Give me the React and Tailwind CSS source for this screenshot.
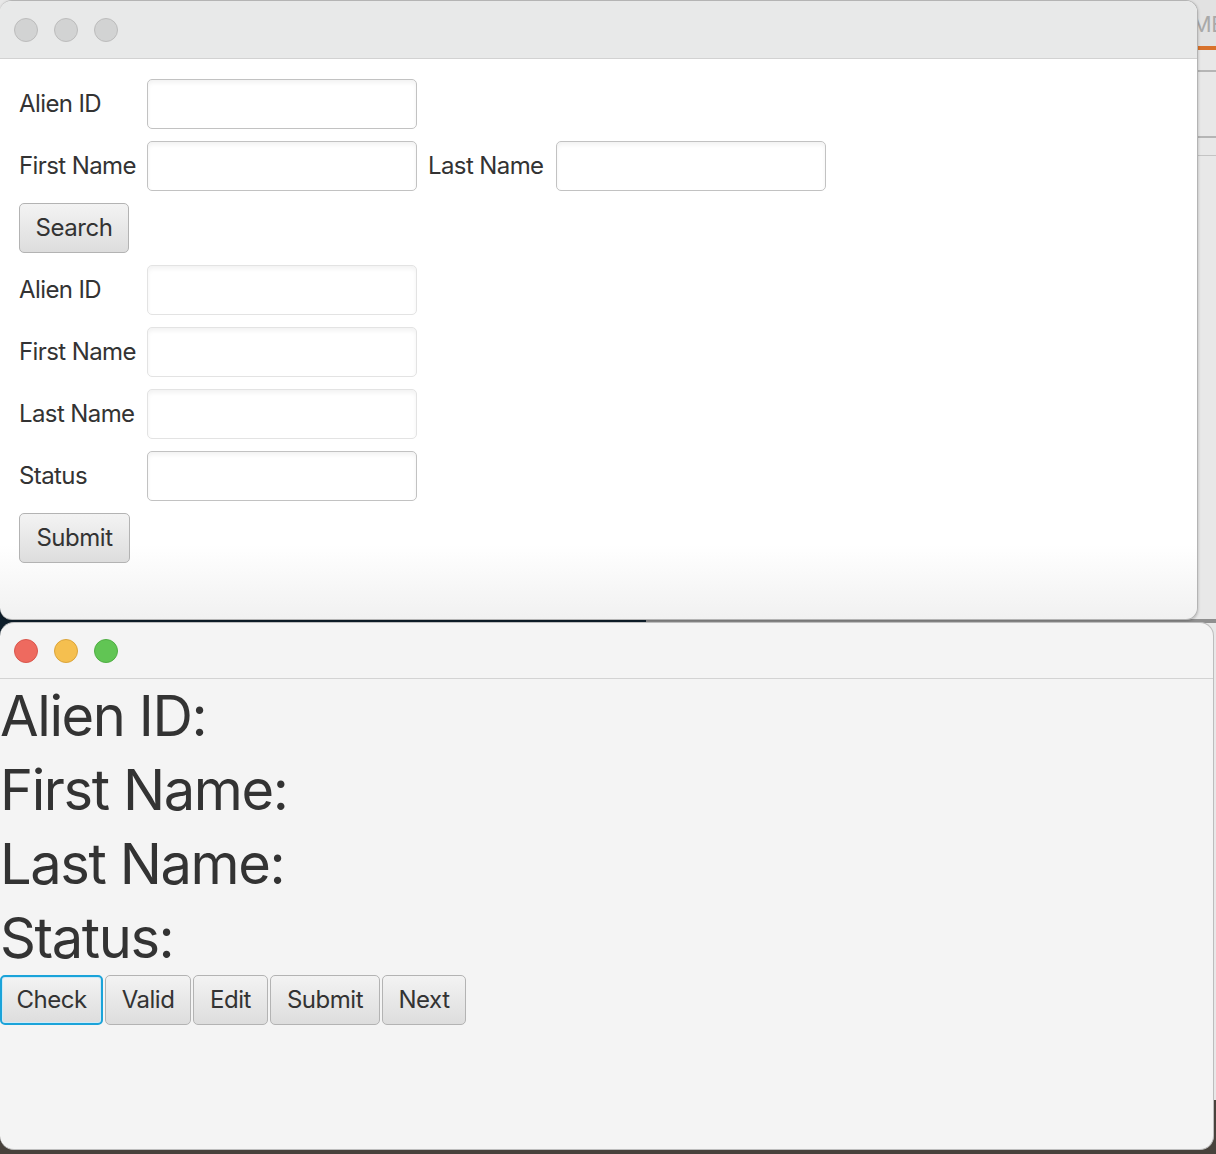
import React from "react";

const Dot = ({ cls }) => (
  <div className={`w-[24px] h-[24px] rounded-full border ${cls}`} />
);

const Field = ({ light }) => (
  <div
    className={`w-[270px] h-[50px] rounded-[5px] bg-white border ${
      light ? "border-[#e3e3e3]" : "border-[#c2c2c2]"
    } shadow-[inset_0_3px_4px_rgba(0,0,0,0.05)]`}
  />
);

const Btn = ({ children, w, focused }) => (
  <button
    className={`${w} h-[50px] rounded-[5px] flex items-center justify-center text-[24px] tracking-[-0.02em] text-[#333333] bg-[linear-gradient(to_bottom,#f3f3f3,#dddddd)] ${
      focused
        ? "border-2 border-[#1aa3d9] shadow-[inset_0_0_0_1px_#cfeaf7]"
        : "border border-[#b3b3b3]"
    }`}
  >
    {children}
  </button>
);

const Label = ({ children, w }) => (
  <div className={`${w} text-[24px] tracking-[-0.025em] text-[#333333]`}>{children}</div>
);

export default function App() {
  return (
    <div className="relative w-[1216px] h-[1154px] overflow-hidden bg-[#e8e8e8] font-['Inter','Noto_Sans',sans-serif]">
      {/* desktop / background app */}
      <div className="absolute left-0 top-[560px] w-[646px] h-[120px] bg-[#0f1f2c]" />
      <div className="absolute left-[646px] top-[619px] right-0 h-[4px] bg-[#8f8f8f]" />
      <div className="absolute left-0 right-0 top-[1100px] bottom-0 bg-[#48423c]" />
      <div className="absolute left-[1150px] top-0 right-0 h-[46px] bg-[#e2e2e2] flex items-start justify-end">
        <span className="mt-[8px] text-[22px] text-[#a9a9a9] tracking-[-0.02em] mr-[-8px]">ME</span>
      </div>
      <div className="absolute left-[1150px] top-[46px] right-0 h-[4px] bg-[#d8722c]" />
      <div className="absolute left-[1150px] top-[70px] right-0 h-[2px] bg-[#b5b5b5]" />
      <div className="absolute left-[1150px] top-[136px] right-0 h-[2px] bg-[#b5b5b5]" />
      <div className="absolute left-[1150px] top-[155px] right-0 h-[1px] bg-[#c4c4c4]" />

      <div className="relative flex flex-col">
        {/* Top window */}
        <div className="w-[1198px] h-[620px] rounded-[12px] border border-l-0 border-[#b4b4b4] overflow-hidden flex flex-col bg-[linear-gradient(to_bottom,#ffffff_88%,#f1f1f1)] shadow-[0_1px_3px_rgba(0,0,0,0.25)]">
          <div className="h-[58px] shrink-0 bg-[#e8e9e9] border-b border-[#d2d2d2] flex items-center gap-[16px] pl-[14px]">
            <Dot cls="bg-[#d2d3d3] border-[#bcbcbc]" />
            <Dot cls="bg-[#d2d3d3] border-[#bcbcbc]" />
            <Dot cls="bg-[#d2d3d3] border-[#bcbcbc]" />
          </div>
          <div className="pl-[19px] pt-[20px] flex flex-col gap-[12px]">
            <div className="flex items-center">
              <Label w="w-[128px]">Alien ID</Label>
              <Field />
            </div>
            <div className="flex items-center">
              <Label w="w-[128px]">First Name</Label>
              <Field />
              <div className="ml-[11px] mr-[12px] text-[24px] tracking-[-0.025em] text-[#333333]">Last Name</div>
              <Field />
            </div>
            <div className="flex">
              <Btn w="w-[110px]">Search</Btn>
            </div>
            <div className="flex items-center">
              <Label w="w-[128px]">Alien ID</Label>
              <Field light />
            </div>
            <div className="flex items-center">
              <Label w="w-[128px]">First Name</Label>
              <Field light />
            </div>
            <div className="flex items-center">
              <Label w="w-[128px]">Last Name</Label>
              <Field light />
            </div>
            <div className="flex items-center">
              <Label w="w-[128px]">Status</Label>
              <Field />
            </div>
            <div className="flex">
              <Btn w="w-[111px]">Submit</Btn>
            </div>
          </div>
        </div>

        {/* Bottom window */}
        <div className="mt-[2px] w-[1214px] h-[528px] rounded-[14px] border border-l-0 border-[#bdbdbd] overflow-hidden flex flex-col bg-[#f4f4f4]">
          <div className="h-[56px] shrink-0 border-b border-[#d3d3d3] flex items-center gap-[16px] pl-[14px]">
            <Dot cls="bg-[#ee6a5f] border-[#d9564c]" />
            <Dot cls="bg-[#f5bf4f] border-[#dba43a]" />
            <Dot cls="bg-[#61c554] border-[#4fae43]" />
          </div>
          <div className="flex flex-col text-[56px] leading-[74px] tracking-[-0.025em] text-[#333333]">
            <div>Alien ID:</div>
            <div>First Name:</div>
            <div>Last Name:</div>
            <div>Status:</div>
          </div>
          <div className="flex gap-[2px]">
            <Btn w="w-[103px]" focused>Check</Btn>
            <Btn w="w-[86px]">Valid</Btn>
            <Btn w="w-[75px]">Edit</Btn>
            <Btn w="w-[110px]">Submit</Btn>
            <Btn w="w-[84px]">Next</Btn>
          </div>
        </div>
      </div>
    </div>
  );
}
